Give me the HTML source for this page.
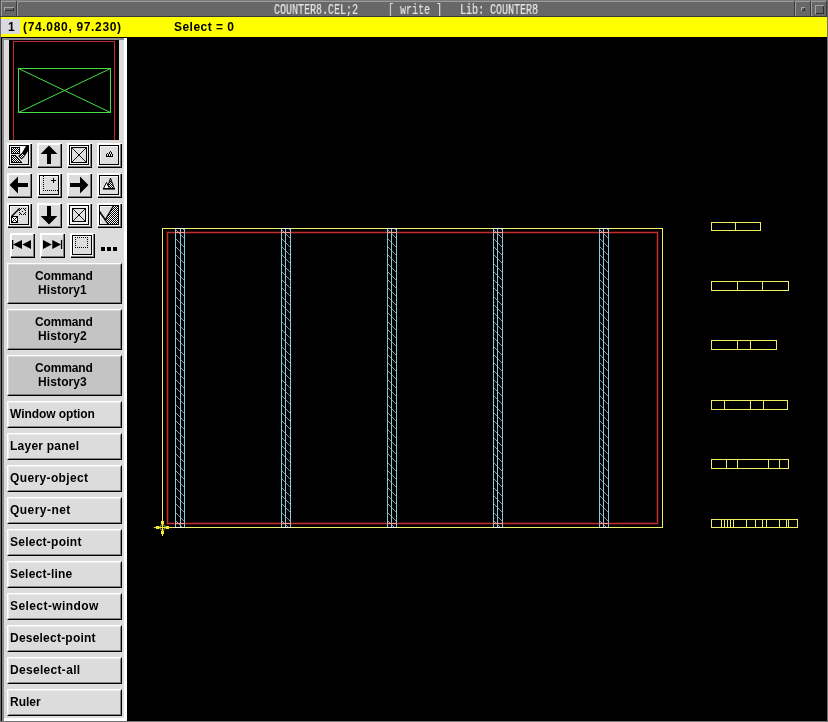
<!DOCTYPE html>
<html><head><meta charset="utf-8"><title>COUNTER8.CEL;2</title>
<style>
html,body{margin:0;padding:0;background:#000;}
body{width:828px;height:722px;position:relative;overflow:hidden;font-family:"Liberation Sans",sans-serif;}
.abs{position:absolute;}
#title{left:0;top:0;width:828px;height:17px;background:#676767;}
#title .txt{position:absolute;left:274px;top:3px;height:14px;line-height:14px;font-family:"Liberation Mono",monospace;font-size:14px;color:#e6e6e6;-webkit-text-stroke:0.2px #e6e6e6;white-space:pre;transform-origin:0 0;transform:scaleX(0.7143);letter-spacing:0px;}
#status{left:0;top:17px;width:828px;height:20px;background:#ffff00;}
#status .n{position:absolute;left:1px;top:2px;width:19px;height:15px;background:#d9d9e0;}
#status span{position:absolute;top:3px;font-weight:bold;font-size:12px;line-height:15px;color:#000;white-space:pre;}
#panel{left:0;top:37px;width:127px;height:684px;background:#dcdcdc;}
#canvas{left:127px;top:37px;width:701px;height:684px;background:#000;}
.ib{position:absolute;width:21px;height:21px;border-style:solid;border-width:2px;border-color:#fff #000 #000 #fff;background:#dcdcdc;}
.ib:after{content:"";position:absolute;left:0;top:0;width:20px;height:20px;border-right:1px solid #7a7a7a;border-bottom:1px solid #7a7a7a;}
.tb{position:absolute;left:7px;width:115px;box-sizing:border-box;border:1px solid;border-color:#fff #000 #000 #fff;background:#dcdcdc;font-weight:bold;font-size:12px;color:#000;}
.tb:after{content:"";position:absolute;left:0;top:0;right:0;bottom:0;border:1px solid;border-color:#ececec #868686 #868686 #ececec;}
.tb.ch{height:41px;background:#c4c4c4;text-align:center;line-height:14px;}
.tb.ch:after{border-color:#d6d6d6 #7c7c7c #7c7c7c #d6d6d6;}
.tb.ch span{display:block;position:relative;top:5px;}
.tb.sm{height:27px;line-height:25px;}
.tb.sm span{position:absolute;left:2px;top:0;white-space:pre;}
svg{position:absolute;left:0;top:0;}
.tb span,#status span,#title .txt{will-change:transform;}
</style></head><body>

<div id="title" class="abs"><div class="txt">COUNTER8.CEL;2     [ write ]   Lib: COUNTER8</div>
<svg width="828" height="17" shape-rendering="crispEdges">
<rect x="0" y="0" width="828" height="1" fill="#7a7a7a"/>
<rect x="1" y="1" width="826" height="1" fill="#9c9c9c"/>
<rect x="0" y="0" width="1" height="17" fill="#555"/>
<rect x="1" y="1" width="1" height="15" fill="#9c9c9c"/>
<rect x="0" y="16" width="828" height="1" fill="#3a3a3a"/>
<rect x="16" y="1" width="1" height="15" fill="#3a3a3a"/>
<rect x="17" y="1" width="1" height="15" fill="#9c9c9c"/>
<rect x="4" y="7" width="10" height="1" fill="#a4a4a4"/><rect x="4" y="7" width="1" height="4" fill="#a4a4a4"/>
<rect x="5" y="10" width="9" height="1" fill="#2e2e2e"/><rect x="13" y="8" width="1" height="3" fill="#2e2e2e"/>
<rect x="794" y="1" width="1" height="15" fill="#3a3a3a"/><rect x="795" y="1" width="1" height="15" fill="#9c9c9c"/>
<rect x="810" y="1" width="1" height="15" fill="#3a3a3a"/><rect x="811" y="1" width="1" height="15" fill="#9c9c9c"/>
<rect x="826" y="1" width="1" height="16" fill="#3a3a3a"/><rect x="827" y="0" width="1" height="17" fill="#666"/>
<rect x="801" y="7" width="4" height="1" fill="#a4a4a4"/><rect x="801" y="7" width="1" height="4" fill="#a4a4a4"/>
<rect x="802" y="10" width="3" height="1" fill="#2e2e2e"/><rect x="804" y="8" width="1" height="3" fill="#2e2e2e"/>
<rect x="815" y="5" width="9" height="1" fill="#a4a4a4"/><rect x="815" y="5" width="1" height="9" fill="#a4a4a4"/>
<rect x="816" y="13" width="8" height="1" fill="#2e2e2e"/><rect x="823" y="6" width="1" height="8" fill="#2e2e2e"/>
</svg></div>
<div id="status" class="abs"><div class="n"></div><span style="left:8px;">1</span><span style="left:23px;letter-spacing:0.67px;">(74.080, 97.230)</span><span style="left:173.5px;letter-spacing:0.46px;">Select = 0</span></div>
<div id="panel" class="abs">
<svg width="127" height="685" shape-rendering="crispEdges">
<rect x="0" y="0" width="127" height="1" fill="#000"/>
<rect x="0" y="1" width="127" height="2" fill="#8a8a8a"/>
<rect x="0" y="0" width="1" height="685" fill="#6e7378"/>
<rect x="1" y="0" width="1" height="685" fill="#000"/>
<rect x="2" y="1" width="2" height="684" fill="#8a8a8a"/>
<rect x="124" y="1" width="3" height="684" fill="#fff"/>
<rect x="4" y="681" width="123" height="3" fill="#fff"/>
<rect x="9" y="3" width="110" height="100" fill="#000"/>
<rect x="13.5" y="4.5" width="101" height="110" fill="none" stroke="#c42a2a" stroke-width="1"/>
<rect x="9" y="103" width="110" height="20" fill="#dcdcdc"/>
<rect x="18.5" y="31.5" width="92" height="44" fill="none" stroke="#46e046" stroke-width="1"/>
</svg>
<svg width="127" height="120"><path d="M18.5 31.5L110.5 75.5M110.5 31.5L18.5 75.5" stroke="#46e046" stroke-width="1" fill="none"/></svg>

<svg width="127" height="230" viewBox="0 37 127 230" shape-rendering="crispEdges">
<defs><pattern id="st" patternUnits="userSpaceOnUse" x="0" y="0" width="2" height="2"><rect width="2" height="2" fill="#000"/><rect x="0" y="0" width="1" height="1" fill="#fff"/><rect x="1" y="1" width="1" height="1" fill="#fff"/></pattern></defs>
<rect x="7" y="143" width="25" height="25" fill="#000"/><rect x="7" y="143" width="24" height="24" fill="#7d7d7d"/><rect x="7" y="143" width="23" height="23" fill="#fff"/><rect x="9" y="145" width="21" height="21" fill="#dcdcdc"/><rect x="30" y="143" width="2" height="1" fill="#fff"/><rect x="31" y="144" width="1" height="1" fill="#fff"/><rect x="7" y="166" width="1" height="2" fill="#fff"/><rect x="8" y="167" width="1" height="1" fill="#fff"/><rect x="9" y="166" width="21" height="1" fill="#7d7d7d"/><rect x="30" y="145" width="1" height="22" fill="#7d7d7d"/><rect x="8" y="167" width="24" height="1" fill="#000"/><rect x="31" y="144" width="1" height="24" fill="#000"/><rect x="7" y="167" width="1" height="1" fill="#eee"/><rect x="31" y="143" width="1" height="1" fill="#eee"/>
<rect x="37" y="143" width="25" height="25" fill="#000"/><rect x="37" y="143" width="24" height="24" fill="#7d7d7d"/><rect x="37" y="143" width="23" height="23" fill="#fff"/><rect x="39" y="145" width="21" height="21" fill="#dcdcdc"/><rect x="60" y="143" width="2" height="1" fill="#fff"/><rect x="61" y="144" width="1" height="1" fill="#fff"/><rect x="37" y="166" width="1" height="2" fill="#fff"/><rect x="38" y="167" width="1" height="1" fill="#fff"/><rect x="39" y="166" width="21" height="1" fill="#7d7d7d"/><rect x="60" y="145" width="1" height="22" fill="#7d7d7d"/><rect x="38" y="167" width="24" height="1" fill="#000"/><rect x="61" y="144" width="1" height="24" fill="#000"/><rect x="37" y="167" width="1" height="1" fill="#eee"/><rect x="61" y="143" width="1" height="1" fill="#eee"/>
<rect x="67" y="143" width="25" height="25" fill="#000"/><rect x="67" y="143" width="24" height="24" fill="#7d7d7d"/><rect x="67" y="143" width="23" height="23" fill="#fff"/><rect x="69" y="145" width="21" height="21" fill="#dcdcdc"/><rect x="90" y="143" width="2" height="1" fill="#fff"/><rect x="91" y="144" width="1" height="1" fill="#fff"/><rect x="67" y="166" width="1" height="2" fill="#fff"/><rect x="68" y="167" width="1" height="1" fill="#fff"/><rect x="69" y="166" width="21" height="1" fill="#7d7d7d"/><rect x="90" y="145" width="1" height="22" fill="#7d7d7d"/><rect x="68" y="167" width="24" height="1" fill="#000"/><rect x="91" y="144" width="1" height="24" fill="#000"/><rect x="67" y="167" width="1" height="1" fill="#eee"/><rect x="91" y="143" width="1" height="1" fill="#eee"/>
<rect x="97" y="143" width="25" height="25" fill="#000"/><rect x="97" y="143" width="24" height="24" fill="#7d7d7d"/><rect x="97" y="143" width="23" height="23" fill="#fff"/><rect x="99" y="145" width="21" height="21" fill="#dcdcdc"/><rect x="120" y="143" width="2" height="1" fill="#fff"/><rect x="121" y="144" width="1" height="1" fill="#fff"/><rect x="97" y="166" width="1" height="2" fill="#fff"/><rect x="98" y="167" width="1" height="1" fill="#fff"/><rect x="99" y="166" width="21" height="1" fill="#7d7d7d"/><rect x="120" y="145" width="1" height="22" fill="#7d7d7d"/><rect x="98" y="167" width="24" height="1" fill="#000"/><rect x="121" y="144" width="1" height="24" fill="#000"/><rect x="97" y="167" width="1" height="1" fill="#eee"/><rect x="121" y="143" width="1" height="1" fill="#eee"/>
<rect x="7" y="173" width="25" height="25" fill="#000"/><rect x="7" y="173" width="24" height="24" fill="#7d7d7d"/><rect x="7" y="173" width="23" height="23" fill="#fff"/><rect x="9" y="175" width="21" height="21" fill="#dcdcdc"/><rect x="30" y="173" width="2" height="1" fill="#fff"/><rect x="31" y="174" width="1" height="1" fill="#fff"/><rect x="7" y="196" width="1" height="2" fill="#fff"/><rect x="8" y="197" width="1" height="1" fill="#fff"/><rect x="9" y="196" width="21" height="1" fill="#7d7d7d"/><rect x="30" y="175" width="1" height="22" fill="#7d7d7d"/><rect x="8" y="197" width="24" height="1" fill="#000"/><rect x="31" y="174" width="1" height="24" fill="#000"/><rect x="7" y="197" width="1" height="1" fill="#eee"/><rect x="31" y="173" width="1" height="1" fill="#eee"/>
<rect x="37" y="173" width="25" height="25" fill="#000"/><rect x="37" y="173" width="24" height="24" fill="#7d7d7d"/><rect x="37" y="173" width="23" height="23" fill="#fff"/><rect x="39" y="175" width="21" height="21" fill="#dcdcdc"/><rect x="60" y="173" width="2" height="1" fill="#fff"/><rect x="61" y="174" width="1" height="1" fill="#fff"/><rect x="37" y="196" width="1" height="2" fill="#fff"/><rect x="38" y="197" width="1" height="1" fill="#fff"/><rect x="39" y="196" width="21" height="1" fill="#7d7d7d"/><rect x="60" y="175" width="1" height="22" fill="#7d7d7d"/><rect x="38" y="197" width="24" height="1" fill="#000"/><rect x="61" y="174" width="1" height="24" fill="#000"/><rect x="37" y="197" width="1" height="1" fill="#eee"/><rect x="61" y="173" width="1" height="1" fill="#eee"/>
<rect x="67" y="173" width="25" height="25" fill="#000"/><rect x="67" y="173" width="24" height="24" fill="#7d7d7d"/><rect x="67" y="173" width="23" height="23" fill="#fff"/><rect x="69" y="175" width="21" height="21" fill="#dcdcdc"/><rect x="90" y="173" width="2" height="1" fill="#fff"/><rect x="91" y="174" width="1" height="1" fill="#fff"/><rect x="67" y="196" width="1" height="2" fill="#fff"/><rect x="68" y="197" width="1" height="1" fill="#fff"/><rect x="69" y="196" width="21" height="1" fill="#7d7d7d"/><rect x="90" y="175" width="1" height="22" fill="#7d7d7d"/><rect x="68" y="197" width="24" height="1" fill="#000"/><rect x="91" y="174" width="1" height="24" fill="#000"/><rect x="67" y="197" width="1" height="1" fill="#eee"/><rect x="91" y="173" width="1" height="1" fill="#eee"/>
<rect x="97" y="173" width="25" height="25" fill="#000"/><rect x="97" y="173" width="24" height="24" fill="#7d7d7d"/><rect x="97" y="173" width="23" height="23" fill="#fff"/><rect x="99" y="175" width="21" height="21" fill="#dcdcdc"/><rect x="120" y="173" width="2" height="1" fill="#fff"/><rect x="121" y="174" width="1" height="1" fill="#fff"/><rect x="97" y="196" width="1" height="2" fill="#fff"/><rect x="98" y="197" width="1" height="1" fill="#fff"/><rect x="99" y="196" width="21" height="1" fill="#7d7d7d"/><rect x="120" y="175" width="1" height="22" fill="#7d7d7d"/><rect x="98" y="197" width="24" height="1" fill="#000"/><rect x="121" y="174" width="1" height="24" fill="#000"/><rect x="97" y="197" width="1" height="1" fill="#eee"/><rect x="121" y="173" width="1" height="1" fill="#eee"/>
<rect x="7" y="203" width="25" height="25" fill="#000"/><rect x="7" y="203" width="24" height="24" fill="#7d7d7d"/><rect x="7" y="203" width="23" height="23" fill="#fff"/><rect x="9" y="205" width="21" height="21" fill="#dcdcdc"/><rect x="30" y="203" width="2" height="1" fill="#fff"/><rect x="31" y="204" width="1" height="1" fill="#fff"/><rect x="7" y="226" width="1" height="2" fill="#fff"/><rect x="8" y="227" width="1" height="1" fill="#fff"/><rect x="9" y="226" width="21" height="1" fill="#7d7d7d"/><rect x="30" y="205" width="1" height="22" fill="#7d7d7d"/><rect x="8" y="227" width="24" height="1" fill="#000"/><rect x="31" y="204" width="1" height="24" fill="#000"/><rect x="7" y="227" width="1" height="1" fill="#eee"/><rect x="31" y="203" width="1" height="1" fill="#eee"/>
<rect x="37" y="203" width="25" height="25" fill="#000"/><rect x="37" y="203" width="24" height="24" fill="#7d7d7d"/><rect x="37" y="203" width="23" height="23" fill="#fff"/><rect x="39" y="205" width="21" height="21" fill="#dcdcdc"/><rect x="60" y="203" width="2" height="1" fill="#fff"/><rect x="61" y="204" width="1" height="1" fill="#fff"/><rect x="37" y="226" width="1" height="2" fill="#fff"/><rect x="38" y="227" width="1" height="1" fill="#fff"/><rect x="39" y="226" width="21" height="1" fill="#7d7d7d"/><rect x="60" y="205" width="1" height="22" fill="#7d7d7d"/><rect x="38" y="227" width="24" height="1" fill="#000"/><rect x="61" y="204" width="1" height="24" fill="#000"/><rect x="37" y="227" width="1" height="1" fill="#eee"/><rect x="61" y="203" width="1" height="1" fill="#eee"/>
<rect x="67" y="203" width="25" height="25" fill="#000"/><rect x="67" y="203" width="24" height="24" fill="#7d7d7d"/><rect x="67" y="203" width="23" height="23" fill="#fff"/><rect x="69" y="205" width="21" height="21" fill="#dcdcdc"/><rect x="90" y="203" width="2" height="1" fill="#fff"/><rect x="91" y="204" width="1" height="1" fill="#fff"/><rect x="67" y="226" width="1" height="2" fill="#fff"/><rect x="68" y="227" width="1" height="1" fill="#fff"/><rect x="69" y="226" width="21" height="1" fill="#7d7d7d"/><rect x="90" y="205" width="1" height="22" fill="#7d7d7d"/><rect x="68" y="227" width="24" height="1" fill="#000"/><rect x="91" y="204" width="1" height="24" fill="#000"/><rect x="67" y="227" width="1" height="1" fill="#eee"/><rect x="91" y="203" width="1" height="1" fill="#eee"/>
<rect x="97" y="203" width="25" height="25" fill="#000"/><rect x="97" y="203" width="24" height="24" fill="#7d7d7d"/><rect x="97" y="203" width="23" height="23" fill="#fff"/><rect x="99" y="205" width="21" height="21" fill="#dcdcdc"/><rect x="120" y="203" width="2" height="1" fill="#fff"/><rect x="121" y="204" width="1" height="1" fill="#fff"/><rect x="97" y="226" width="1" height="2" fill="#fff"/><rect x="98" y="227" width="1" height="1" fill="#fff"/><rect x="99" y="226" width="21" height="1" fill="#7d7d7d"/><rect x="120" y="205" width="1" height="22" fill="#7d7d7d"/><rect x="98" y="227" width="24" height="1" fill="#000"/><rect x="121" y="204" width="1" height="24" fill="#000"/><rect x="97" y="227" width="1" height="1" fill="#eee"/><rect x="121" y="203" width="1" height="1" fill="#eee"/>
<rect x="10" y="233" width="25" height="25" fill="#000"/><rect x="10" y="233" width="24" height="24" fill="#7d7d7d"/><rect x="10" y="233" width="23" height="23" fill="#fff"/><rect x="12" y="235" width="21" height="21" fill="#dcdcdc"/><rect x="33" y="233" width="2" height="1" fill="#fff"/><rect x="34" y="234" width="1" height="1" fill="#fff"/><rect x="10" y="256" width="1" height="2" fill="#fff"/><rect x="11" y="257" width="1" height="1" fill="#fff"/><rect x="12" y="256" width="21" height="1" fill="#7d7d7d"/><rect x="33" y="235" width="1" height="22" fill="#7d7d7d"/><rect x="11" y="257" width="24" height="1" fill="#000"/><rect x="34" y="234" width="1" height="24" fill="#000"/><rect x="10" y="257" width="1" height="1" fill="#eee"/><rect x="34" y="233" width="1" height="1" fill="#eee"/>
<rect x="40" y="233" width="25" height="25" fill="#000"/><rect x="40" y="233" width="24" height="24" fill="#7d7d7d"/><rect x="40" y="233" width="23" height="23" fill="#fff"/><rect x="42" y="235" width="21" height="21" fill="#dcdcdc"/><rect x="63" y="233" width="2" height="1" fill="#fff"/><rect x="64" y="234" width="1" height="1" fill="#fff"/><rect x="40" y="256" width="1" height="2" fill="#fff"/><rect x="41" y="257" width="1" height="1" fill="#fff"/><rect x="42" y="256" width="21" height="1" fill="#7d7d7d"/><rect x="63" y="235" width="1" height="22" fill="#7d7d7d"/><rect x="41" y="257" width="24" height="1" fill="#000"/><rect x="64" y="234" width="1" height="24" fill="#000"/><rect x="40" y="257" width="1" height="1" fill="#eee"/><rect x="64" y="233" width="1" height="1" fill="#eee"/>
<rect x="70" y="233" width="25" height="25" fill="#000"/><rect x="70" y="233" width="24" height="24" fill="#7d7d7d"/><rect x="70" y="233" width="23" height="23" fill="#fff"/><rect x="72" y="235" width="21" height="21" fill="#dcdcdc"/><rect x="93" y="233" width="2" height="1" fill="#fff"/><rect x="94" y="234" width="1" height="1" fill="#fff"/><rect x="70" y="256" width="1" height="2" fill="#fff"/><rect x="71" y="257" width="1" height="1" fill="#fff"/><rect x="72" y="256" width="21" height="1" fill="#7d7d7d"/><rect x="93" y="235" width="1" height="22" fill="#7d7d7d"/><rect x="71" y="257" width="24" height="1" fill="#000"/><rect x="94" y="234" width="1" height="24" fill="#000"/><rect x="70" y="257" width="1" height="1" fill="#eee"/><rect x="94" y="233" width="1" height="1" fill="#eee"/>
<rect x="101" y="247" width="4" height="4" fill="#000"/>
<rect x="107" y="247" width="4" height="4" fill="#000"/>
<rect x="113" y="247" width="4" height="4" fill="#000"/>
<g shape-rendering="auto" fill="#000">
<path d="M49 145.6L57.4 154H51V164H47V154H40.6Z"/>
<path d="M49 224.4L57.4 216H51V206H47V216H40.6Z"/>
<path d="M9.6 185L18 176.6V183H28V187H18V193.4Z"/>
<path d="M88.4 185L80 176.6V183H70V187H80V193.4Z"/>
<path d="M13 244.5L22 240V249ZM22.3 244.5L31 240V249Z"/><rect x="12" y="240" width="1.3" height="9"/>
<path d="M51.7 244.5L43 240V249ZM61 244.5L52.3 240V249Z"/><rect x="60.9" y="240" width="1.3" height="9"/>
</g>
<rect x="9" y="145" width="20" height="20" fill="#000"/><rect x="10" y="146" width="18" height="18" fill="#f6f6f6"/><rect x="11" y="147" width="17" height="17" fill="#e2e2e2"/><rect x="29" y="145" width="1" height="21" fill="#f2f2f2"/><rect x="9" y="165" width="21" height="1" fill="#f2f2f2"/>
<rect x="11" y="147" width="9" height="7" fill="#000"/><rect x="12" y="148" width="7" height="5" fill="url(#st)"/>
<path d="M11 155H15.8L22.8 163H11Z" fill="#000" shape-rendering="auto"/>
<path d="M12 156H15L21 162H12Z" fill="url(#st)"/>
<path d="M20.5 146.5H26L22 153L20.5 154Z" fill="#fff" shape-rendering="auto"/>
<path d="M16.5 155L23.5 163" stroke="#fff" stroke-width="1" fill="none" shape-rendering="auto"/>
<path d="M26 146H28V151L25 155.8L21.8 153.2Z" fill="#000" shape-rendering="auto"/>
<path d="M22 153L25 156L21.5 159.5L18 156Z" fill="#000" shape-rendering="auto"/>
<path d="M22 154L24 156L21.5 158.5L19 156Z" fill="url(#st)"/>
<rect x="69" y="145" width="20" height="20" fill="#000"/><rect x="70" y="146" width="18" height="18" fill="#f6f6f6"/><rect x="71" y="147" width="17" height="17" fill="#f0f0f0"/><rect x="89" y="145" width="1" height="21" fill="#f2f2f2"/><rect x="69" y="165" width="21" height="1" fill="#f2f2f2"/><rect x="71" y="147" width="16" height="16" fill="#000"/><rect x="72.25" y="148.25" width="13.5" height="13.5" fill="#e0e0e0"/><g shape-rendering="auto"><path d="M72 148L86 162M86 148L72 162" stroke="#000" stroke-width="0.9" fill="none"/><rect x="78.2" y="154.2" width="1.6" height="1.6" fill="#000"/></g>
<rect x="69" y="205" width="20" height="20" fill="#000"/><rect x="70" y="206" width="18" height="18" fill="#f6f6f6"/><rect x="71" y="207" width="17" height="17" fill="#f0f0f0"/><rect x="89" y="205" width="1" height="21" fill="#f2f2f2"/><rect x="69" y="225" width="21" height="1" fill="#f2f2f2"/><rect x="72" y="208" width="14" height="14" fill="#000"/><rect x="73.25" y="209.25" width="11.5" height="11.5" fill="#e0e0e0"/><g shape-rendering="auto"><path d="M73 209L85 221M85 209L73 221" stroke="#000" stroke-width="0.9" fill="none"/><rect x="78.2" y="214.2" width="1.6" height="1.6" fill="#000"/></g>
<rect x="99" y="145" width="20" height="20" fill="#000"/><rect x="100" y="146" width="18" height="18" fill="#f6f6f6"/><rect x="101" y="147" width="17" height="17" fill="#dedede"/><rect x="119" y="145" width="1" height="21" fill="#f2f2f2"/><rect x="99" y="165" width="21" height="1" fill="#f2f2f2"/>
<path d="M110 151h1v1h-1zM109 152h1v1h-1zM111 152h1v1h-1zM107 153h1v1h-1zM109 153h1v1h-1zM111 153h1v1h-1zM106 154h1v1h-1zM108 154h1v1h-1zM110 154h1v1h-1zM112 154h1v1h-1zM106 155h1v1h-1zM108 155h1v1h-1zM110 155h1v1h-1zM112 155h1v1h-1zM106 156h1v1h-1zM107 156h1v1h-1zM108 156h1v1h-1zM109 156h1v1h-1zM110 156h1v1h-1zM111 156h1v1h-1zM112 156h1v1h-1z" fill="#000"/>
<rect x="39" y="175" width="20" height="20" fill="#000"/><rect x="40" y="176" width="18" height="18" fill="#f6f6f6"/><rect x="41" y="177" width="17" height="17" fill="#dedede"/><rect x="59" y="175" width="1" height="21" fill="#f2f2f2"/><rect x="39" y="195" width="21" height="1" fill="#f2f2f2"/>
<path d="M43 176h1v1h-1zM43 178h1v1h-1zM43 180h1v1h-1zM43 182h1v1h-1zM43 184h1v1h-1zM43 186h1v1h-1zM43 188h1v1h-1zM43 190h1v1h-1zM45 190h1v1h-1zM47 190h1v1h-1zM49 190h1v1h-1zM51 190h1v1h-1zM53 190h1v1h-1zM55 190h1v1h-1zM57 190h1v1h-1z" fill="#000"/>
<rect x="51" y="180" width="5" height="1" fill="#000"/><rect x="53" y="178" width="1" height="5" fill="#000"/>
<rect x="99" y="175" width="20" height="20" fill="#000"/><rect x="100" y="176" width="18" height="18" fill="#f6f6f6"/><rect x="101" y="177" width="17" height="17" fill="#dedede"/><rect x="119" y="175" width="1" height="21" fill="#f2f2f2"/><rect x="99" y="195" width="21" height="1" fill="#f2f2f2"/>
<g shape-rendering="auto"><path d="M107 188.5L110.5 178.2L114.3 188.5Z" fill="url(#st)" stroke="#000" stroke-width="1"/><path d="M103.5 188.5L106.5 182.5L109.5 188.5Z" fill="#fff" stroke="#000" stroke-width="1"/><rect x="103" y="188" width="12" height="1.6" fill="#000"/></g>
<rect x="9" y="205" width="20" height="20" fill="#000"/><rect x="10" y="206" width="18" height="18" fill="#f6f6f6"/><rect x="11" y="207" width="17" height="17" fill="#dedede"/><rect x="29" y="205" width="1" height="21" fill="#f2f2f2"/><rect x="9" y="225" width="21" height="1" fill="#f2f2f2"/>
<rect x="11" y="216" width="7" height="7" fill="#000"/><rect x="12" y="217" width="5" height="5" fill="#fff"/>
<g shape-rendering="auto"><path d="M12 217L17 222M17 217L12 222" stroke="#000" stroke-width="1" fill="none"/><path d="M11.5 216.5L19.5 208.5" stroke="#000" stroke-width="1.4" fill="none"/></g>
<path d="M19 208h1v1h-1zM19 210h1v1h-1zM19 212h1v1h-1zM19 214h1v1h-1zM21 208h1v1h-1zM21 214h1v1h-1zM23 208h1v1h-1zM23 214h1v1h-1zM25 208h1v1h-1zM25 210h1v1h-1zM25 212h1v1h-1zM25 214h1v1h-1zM20 209h1v1h-1zM24 209h1v1h-1zM22 211h1v1h-1zM20 213h1v1h-1zM24 213h1v1h-1z" fill="#000"/>
<rect x="99" y="205" width="20" height="20" fill="#000"/><rect x="100" y="206" width="18" height="18" fill="#f6f6f6"/><rect x="101" y="207" width="17" height="17" fill="#dedede"/><rect x="119" y="205" width="1" height="21" fill="#f2f2f2"/><rect x="99" y="225" width="21" height="1" fill="#f2f2f2"/>
<path d="M113 206H118V224H108L105 220Z" fill="url(#st)"/>
<g shape-rendering="auto"><path d="M113.3 206L105.2 220L108 224" stroke="#000" stroke-width="1.3" fill="none"/><path d="M100 212.5L105.5 220" stroke="#000" stroke-width="1.5" fill="none"/><rect x="99.6" y="211.6" width="1.6" height="1.6"/></g>
<rect x="72" y="235" width="20" height="20" fill="#000"/><rect x="73" y="236" width="18" height="18" fill="#f6f6f6"/><rect x="74" y="237" width="17" height="17" fill="#dedede"/><rect x="92" y="235" width="1" height="21" fill="#f2f2f2"/><rect x="72" y="255" width="21" height="1" fill="#f2f2f2"/>
<path d="M75 237h1v1h-1zM75 247h1v1h-1zM77 237h1v1h-1zM77 247h1v1h-1zM79 237h1v1h-1zM79 247h1v1h-1zM81 237h1v1h-1zM81 247h1v1h-1zM83 237h1v1h-1zM83 247h1v1h-1zM85 237h1v1h-1zM85 247h1v1h-1zM87 237h1v1h-1zM87 247h1v1h-1zM75 239h1v1h-1zM87 239h1v1h-1zM75 241h1v1h-1zM87 241h1v1h-1zM75 243h1v1h-1zM87 243h1v1h-1zM75 245h1v1h-1zM87 245h1v1h-1z" fill="#000"/>
</svg>
<div class="tb ch" style="top:226px;"><span><i style="font-style:normal;letter-spacing:-0.13px;position:relative;left:-0.7px">Command</i><br><i style="font-style:normal;position:relative;left:-2px;letter-spacing:0.1px">History1</i></span></div>
<div class="tb ch" style="top:272px;"><span><i style="font-style:normal;letter-spacing:-0.13px;position:relative;left:-0.7px">Command</i><br><i style="font-style:normal;position:relative;left:-2px;letter-spacing:0.1px">History2</i></span></div>
<div class="tb ch" style="top:318px;"><span><i style="font-style:normal;letter-spacing:-0.13px;position:relative;left:-0.7px">Command</i><br><i style="font-style:normal;position:relative;left:-2px;letter-spacing:0.1px">History3</i></span></div>
<div class="tb sm" style="top:364px;"><span style="letter-spacing:-0.08px">Window option</span></div>
<div class="tb sm" style="top:396px;"><span style="letter-spacing:0.24px">Layer panel</span></div>
<div class="tb sm" style="top:428px;"><span style="letter-spacing:0.37px">Query-object</span></div>
<div class="tb sm" style="top:460px;"><span style="letter-spacing:0.46px">Query-net</span></div>
<div class="tb sm" style="top:492px;"><span style="letter-spacing:0.25px">Select-point</span></div>
<div class="tb sm" style="top:524px;"><span style="letter-spacing:0.22px">Select-line</span></div>
<div class="tb sm" style="top:556px;"><span style="letter-spacing:0.42px">Select-window</span></div>
<div class="tb sm" style="top:588px;"><span style="letter-spacing:0.22px">Deselect-point</span></div>
<div class="tb sm" style="top:620px;"><span style="letter-spacing:0.31px">Deselect-all</span></div>
<div class="tb sm" style="top:652px;"><span style="letter-spacing:0px">Ruler</span></div>
</div>
<div id="canvas" class="abs">
<svg width="701" height="685" viewBox="127 37 701 685">
<g shape-rendering="crispEdges" fill="none" stroke-width="1">
<rect x="167.5" y="232.5" width="490" height="291" stroke="#3a0808" stroke-width="3"/>
<rect x="167.5" y="232.5" width="490" height="291" stroke="#bc3034"/>
<g><clipPath id="c0"><rect x="175" y="229" width="9" height="298"/></clipPath><g clip-path="url(#c0)">
<path d="M174 211.7L186 223.7M174 220.0L186 232.0M174 228.3L186 240.3M174 236.6L186 248.6M174 244.9L186 256.9M174 253.2L186 265.2M174 261.5L186 273.5M174 269.8L186 281.8M174 278.1L186 290.1M174 286.4L186 298.4M174 294.7L186 306.7M174 303.0L186 315.0M174 311.3L186 323.3M174 319.6L186 331.6M174 327.9L186 339.9M174 336.2L186 348.2M174 344.5L186 356.5M174 352.8L186 364.8M174 361.1L186 373.1M174 369.4L186 381.4M174 377.7L186 389.7M174 386.0L186 398.0M174 394.3L186 406.3M174 402.6L186 414.6M174 410.9L186 422.9M174 419.2L186 431.2M174 427.5L186 439.5M174 435.8L186 447.8M174 444.1L186 456.1M174 452.4L186 464.4M174 460.7L186 472.7M174 469.0L186 481.0M174 477.3L186 489.3M174 485.6L186 497.6M174 493.9L186 505.9M174 502.2L186 514.2M174 510.5L186 522.5M174 518.8L186 530.8M174 527.1L186 539.1" stroke="#a8d4dc" stroke-width="0.72"/></g></g>
<path d="M175.5 228.5V527.5M180.5 228.5V527.5M184.5 228.5V527.5" stroke="#8cc8d8"/>
<g><clipPath id="c1"><rect x="281" y="229" width="9" height="298"/></clipPath><g clip-path="url(#c1)">
<path d="M280 211.7L292 223.7M280 220.0L292 232.0M280 228.3L292 240.3M280 236.6L292 248.6M280 244.9L292 256.9M280 253.2L292 265.2M280 261.5L292 273.5M280 269.8L292 281.8M280 278.1L292 290.1M280 286.4L292 298.4M280 294.7L292 306.7M280 303.0L292 315.0M280 311.3L292 323.3M280 319.6L292 331.6M280 327.9L292 339.9M280 336.2L292 348.2M280 344.5L292 356.5M280 352.8L292 364.8M280 361.1L292 373.1M280 369.4L292 381.4M280 377.7L292 389.7M280 386.0L292 398.0M280 394.3L292 406.3M280 402.6L292 414.6M280 410.9L292 422.9M280 419.2L292 431.2M280 427.5L292 439.5M280 435.8L292 447.8M280 444.1L292 456.1M280 452.4L292 464.4M280 460.7L292 472.7M280 469.0L292 481.0M280 477.3L292 489.3M280 485.6L292 497.6M280 493.9L292 505.9M280 502.2L292 514.2M280 510.5L292 522.5M280 518.8L292 530.8M280 527.1L292 539.1" stroke="#a8d4dc" stroke-width="0.72"/></g></g>
<path d="M281.5 228.5V527.5M285.5 228.5V527.5M290.5 228.5V527.5" stroke="#8cc8d8"/>
<g><clipPath id="c2"><rect x="387" y="229" width="9" height="298"/></clipPath><g clip-path="url(#c2)">
<path d="M386 211.7L398 223.7M386 220.0L398 232.0M386 228.3L398 240.3M386 236.6L398 248.6M386 244.9L398 256.9M386 253.2L398 265.2M386 261.5L398 273.5M386 269.8L398 281.8M386 278.1L398 290.1M386 286.4L398 298.4M386 294.7L398 306.7M386 303.0L398 315.0M386 311.3L398 323.3M386 319.6L398 331.6M386 327.9L398 339.9M386 336.2L398 348.2M386 344.5L398 356.5M386 352.8L398 364.8M386 361.1L398 373.1M386 369.4L398 381.4M386 377.7L398 389.7M386 386.0L398 398.0M386 394.3L398 406.3M386 402.6L398 414.6M386 410.9L398 422.9M386 419.2L398 431.2M386 427.5L398 439.5M386 435.8L398 447.8M386 444.1L398 456.1M386 452.4L398 464.4M386 460.7L398 472.7M386 469.0L398 481.0M386 477.3L398 489.3M386 485.6L398 497.6M386 493.9L398 505.9M386 502.2L398 514.2M386 510.5L398 522.5M386 518.8L398 530.8M386 527.1L398 539.1" stroke="#a8d4dc" stroke-width="0.72"/></g></g>
<path d="M387.5 228.5V527.5M391.5 228.5V527.5M396.5 228.5V527.5" stroke="#8cc8d8"/>
<g><clipPath id="c3"><rect x="493" y="229" width="9" height="298"/></clipPath><g clip-path="url(#c3)">
<path d="M492 211.7L504 223.7M492 220.0L504 232.0M492 228.3L504 240.3M492 236.6L504 248.6M492 244.9L504 256.9M492 253.2L504 265.2M492 261.5L504 273.5M492 269.8L504 281.8M492 278.1L504 290.1M492 286.4L504 298.4M492 294.7L504 306.7M492 303.0L504 315.0M492 311.3L504 323.3M492 319.6L504 331.6M492 327.9L504 339.9M492 336.2L504 348.2M492 344.5L504 356.5M492 352.8L504 364.8M492 361.1L504 373.1M492 369.4L504 381.4M492 377.7L504 389.7M492 386.0L504 398.0M492 394.3L504 406.3M492 402.6L504 414.6M492 410.9L504 422.9M492 419.2L504 431.2M492 427.5L504 439.5M492 435.8L504 447.8M492 444.1L504 456.1M492 452.4L504 464.4M492 460.7L504 472.7M492 469.0L504 481.0M492 477.3L504 489.3M492 485.6L504 497.6M492 493.9L504 505.9M492 502.2L504 514.2M492 510.5L504 522.5M492 518.8L504 530.8M492 527.1L504 539.1" stroke="#a8d4dc" stroke-width="0.72"/></g></g>
<path d="M493.5 228.5V527.5M497.5 228.5V527.5M502.5 228.5V527.5" stroke="#8cc8d8"/>
<g><clipPath id="c4"><rect x="599" y="229" width="9" height="298"/></clipPath><g clip-path="url(#c4)">
<path d="M598 211.7L610 223.7M598 220.0L610 232.0M598 228.3L610 240.3M598 236.6L610 248.6M598 244.9L610 256.9M598 253.2L610 265.2M598 261.5L610 273.5M598 269.8L610 281.8M598 278.1L610 290.1M598 286.4L610 298.4M598 294.7L610 306.7M598 303.0L610 315.0M598 311.3L610 323.3M598 319.6L610 331.6M598 327.9L610 339.9M598 336.2L610 348.2M598 344.5L610 356.5M598 352.8L610 364.8M598 361.1L610 373.1M598 369.4L610 381.4M598 377.7L610 389.7M598 386.0L610 398.0M598 394.3L610 406.3M598 402.6L610 414.6M598 410.9L610 422.9M598 419.2L610 431.2M598 427.5L610 439.5M598 435.8L610 447.8M598 444.1L610 456.1M598 452.4L610 464.4M598 460.7L610 472.7M598 469.0L610 481.0M598 477.3L610 489.3M598 485.6L610 497.6M598 493.9L610 505.9M598 502.2L610 514.2M598 510.5L610 522.5M598 518.8L610 530.8M598 527.1L610 539.1" stroke="#a8d4dc" stroke-width="0.72"/></g></g>
<path d="M599.5 228.5V527.5M603.5 228.5V527.5M608.5 228.5V527.5" stroke="#8cc8d8"/>
<rect x="162.5" y="228.5" width="500" height="299" stroke="#f0f060"/>
<path d="M175 228.5H185M175 527.5H185" stroke="#f4f4e0"/>
<path d="M175 232.5H185M175 523.5H185" stroke="#e8a0a0"/>
<path d="M281 228.5H291M281 527.5H291" stroke="#f4f4e0"/>
<path d="M281 232.5H291M281 523.5H291" stroke="#e8a0a0"/>
<path d="M387 228.5H397M387 527.5H397" stroke="#f4f4e0"/>
<path d="M387 232.5H397M387 523.5H397" stroke="#e8a0a0"/>
<path d="M493 228.5H503M493 527.5H503" stroke="#f4f4e0"/>
<path d="M493 232.5H503M493 523.5H503" stroke="#e8a0a0"/>
<path d="M599 228.5H609M599 527.5H609" stroke="#f4f4e0"/>
<path d="M599 232.5H609M599 523.5H609" stroke="#e8a0a0"/>
<rect x="711.5" y="222.5" width="49" height="8" stroke="#f0f060"/>
<path d="M735.5 222.5V230.5" stroke="#f0f060"/>
<rect x="711.5" y="281.5" width="77" height="9" stroke="#f0f060"/>
<path d="M737.5 281.5V290.5M762.5 281.5V290.5" stroke="#f0f060"/>
<rect x="711.5" y="340.5" width="65" height="9" stroke="#f0f060"/>
<path d="M737.5 340.5V349.5M750.5 340.5V349.5" stroke="#f0f060"/>
<rect x="711.5" y="400.5" width="76" height="9" stroke="#f0f060"/>
<path d="M724.5 400.5V409.5M750.5 400.5V409.5M763.5 400.5V409.5" stroke="#f0f060"/>
<rect x="711.5" y="459.5" width="77" height="9" stroke="#f0f060"/>
<path d="M726.5 459.5V468.5M737.5 459.5V468.5M768.5 459.5V468.5M779.5 459.5V468.5" stroke="#f0f060"/>
<rect x="711.5" y="519.5" width="86" height="8" stroke="#f0f060"/>
<path d="M721.5 519.5V527.5M724.5 519.5V527.5M727.5 519.5V527.5M730.5 519.5V527.5M733.5 519.5V527.5M746.5 519.5V527.5M755.5 519.5V527.5M762.5 519.5V527.5M766.5 519.5V527.5M779.5 519.5V527.5M786.5 519.5V527.5M788.5 519.5V527.5" stroke="#f0f060"/>
</g>
<g fill="#f6ec34" shape-rendering="crispEdges"><rect x="154" y="527" width="16" height="1"/><rect x="162" y="520" width="1" height="16"/><rect x="156" y="526" width="3" height="3"/><rect x="166" y="526" width="3" height="3"/><rect x="161" y="521" width="3" height="3"/><rect x="161" y="531" width="3" height="3"/></g><path d="M159 527.5L162.5 524L166 527.5L162.5 531Z" fill="none" stroke="#e8e060" stroke-width="1"/>
</svg>
</div>
<div class="abs" style="left:0;top:721px;width:828px;height:1px;background:#757575;"></div><div class="abs" style="left:827px;top:17px;width:1px;height:705px;background:#707070;"></div><div class="abs" style="left:0;top:17px;width:1px;height:705px;background:#6e7072;"></div>
</body></html>
